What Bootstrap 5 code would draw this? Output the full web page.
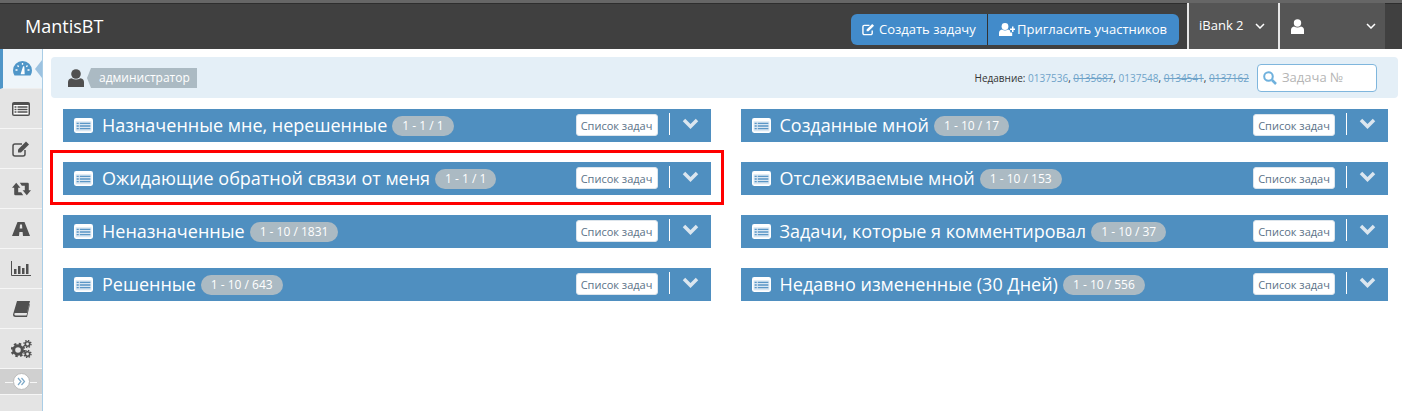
<!DOCTYPE html>
<html lang="ru"><head><meta charset="utf-8"><title>MantisBT</title>
<link href="https://cdn.jsdelivr.net/npm/bootstrap@5.3.0/dist/css/bootstrap.min.css" rel="stylesheet">
<style>
html,body{height:411px;overflow:hidden}
body{font-family:"Open Sans",sans-serif;font-size:13px;color:#393939;background:#fff;position:relative}
.topbar{height:49px;background:#404040;border-top:3px solid #666;box-shadow:inset 0 1px 0 #2e2e2e}
.brand{color:#fff;font-size:18px;margin-left:25px;line-height:46px}
.actions{margin-right:17px}
.grp{margin-right:8px;align-self:flex-start;margin-top:11px}
.acbtn{background:#428bca;color:#fff;font-size:13px;height:31px;padding-left:11px;display:flex;align-items:center;gap:4px;white-space:nowrap}
.acbtn svg{flex:none}
.acbtn:first-child{border-radius:6px 0 0 6px;border-right:1px solid #333;width:137px}
.acbtn:last-child{border-radius:0 6px 6px 0;width:191px;gap:2px}
.usercell{background:#555;color:#fff;border-left:2px solid #e6e6e6;height:46px;display:flex;align-items:center;font-size:13px}
.cell1{width:91px;padding-left:10px;padding-right:13px}
.cell2{width:107px;padding-left:11px;padding-right:9px}
.sidebar{width:43px;background:#e4e4e4;border-right:1px solid #a9cde6;height:362px;flex:none}
.sitem{height:40px;border-bottom:1px solid #f6f6f6;display:flex;align-items:center;justify-content:center;position:relative}
.sitem.on{background:#eef5fa;border-left:3px solid #4f96c8;border-bottom:1px solid #eee}
.sitem.on::after{content:"";position:absolute;right:0;top:11px;border:9px solid transparent;border-right:7px solid #9cc2e0;border-left:0}
.scoll{height:26px;background:#d0d0d0;border-bottom:1px solid #f6f6f6;display:flex;align-items:center;justify-content:center;position:relative}
.scoll::before{content:"";position:absolute;left:5px;right:5px;top:13px;border-top:1px solid #f6f6f6}
.scirc{width:17px;height:17px;border-radius:50%;background:#fff;border:1px solid #bbb;position:relative;display:flex;align-items:center;justify-content:center}
.crumbs{height:41px;margin:8px 4px 0 8px;background:#e4eff7;border-radius:4px;display:flex;align-items:center;padding:0 21px 0 17px}
.role{background:#abbac3;color:#fff;font-size:12px;height:20px;line-height:20px;padding:0 7px 0 8px;margin-left:7px;position:relative}
.role::before{content:"";position:absolute;left:-4px;top:0;border:10px solid transparent;border-left:0;border-right:4px solid #abbac3}
.recent{font-size:10px;color:#333;margin-right:8px;margin-top:1px}
.recent a{color:#6fa3c9;text-decoration:none}
.recent a.done{text-decoration:line-through}
.srch{width:120px;height:28px;background:#fff;border:1px solid #7fb6dd;border-radius:4px;display:flex;align-items:center;padding-left:5px;gap:5px;color:#b5b5b5;font-size:13px}
.boards{padding:11px 14px 0 20px}
.boards>.row{--bs-gutter-x:30px;--bs-gutter-y:20px}
.wbar{height:33px;background:#4f8fc0;color:#fff;display:flex;align-items:center;padding-left:11px}
.wbar>svg:first-child{flex:none}
.wtitle{font-size:18px;margin-left:9px;white-space:nowrap}
.pill{background:#abbac3;color:#fff;font-size:12px;border-radius:10px;height:20px;line-height:20px;padding:0 10px;margin-left:5px;white-space:nowrap}
.lbtn{background:#fff;color:#5b7288;font-size:11px;height:22px;line-height:21px;width:82px;text-align:center;border-radius:3px;border:1px solid #dde5ec;margin-left:auto;margin-top:-2px;white-space:nowrap}
.vsep{width:1px;height:22px;background:#fff;margin:-4px 12px 0 11px}
.chev{margin-right:12px;margin-top:-5px}
.redbox{position:absolute;left:50px;top:150px;width:674px;height:55px;border:3px solid #f00;pointer-events:none}
</style></head><body>
<header class="topbar d-flex justify-content-between">
<div class="brand">MantisBT</div>
<div class="d-flex align-items-center actions">
<div class="d-flex grp"><div class="acbtn">
<svg width="13" height="13" viewBox="0 0 14 14"><path d="M11 8v3a1.500 1.500 0 0 1-1.500 1.500h-7A1.500 1.500 0 0 1 1 11V4a1.500 1.500 0 0 1 1.500-1.500H8" fill="none" stroke="#fff" stroke-width="1.500"/><path d="M5 7 11 1l2 2-6 6H5z" fill="#fff"/></svg>Создать задачу</div>
<div class="acbtn"><svg width="16" height="13" viewBox="0 0 16 13"><circle cx="6" cy="3.500" r="3.400" fill="#fff"/><path d="M0 13V10q0-3 3-3.500 3 2 6 0 1.500.3 2.200 1.200v1.800h2V13z" fill="#fff"/><path d="M11 5.500h2v-2h1.500v2H16V7h-1.500v2H13V7h-2z" fill="#fff"/></svg>Пригласить участников</div></div>
<div class="usercell cell1">iBank 2<svg class="ms-auto" width="10" height="6" viewBox="0 0 10 6"><path d="M1 1l4 4 4-4" fill="none" stroke="#fff" stroke-width="1.500"/></svg></div>
<div class="usercell cell2"><svg width="13" height="15" viewBox="0 0 13 15"><circle cx="6.500" cy="4" r="3.700" fill="#fff"/><path d="M0 15V11q0-3 3-3.500 3.500 2 7 0 3 .5 3 3.500v4z" fill="#fff"/></svg><svg class="ms-auto" width="10" height="6" viewBox="0 0 10 6"><path d="M1 1l4 4 4-4" fill="none" stroke="#fff" stroke-width="1.500"/></svg></div>
</div>
</header>
<div class="d-flex">
<nav class="sidebar">
<div class="sitem on"><svg width="19" height="15" viewBox="0 0 19 15"><path d="M9.500 0A9.500 9.500 0 0 0 0 9.500q0 3 1.500 5h16q1.500-2 1.500-5A9.500 9.500 0 0 0 9.500 0z" fill="#4f96c8"/><path d="M8.500 12.500l2.200-7 .3 7zM2.500 9h2M14.500 9h2M4.500 4.500l1.200 1.200M14.500 4.500l-1.200 1.200M9.500 2v1.800" stroke="#fff" stroke-width="1.300" fill="#fff"/></svg></div>
<div class="sitem"><svg width="18" height="14" viewBox="0 0 18 14"><rect width="18" height="14" rx="2" fill="#505050"/><rect x="1.500" y="3" width="15" height="9.500" fill="#fff"/><path d="M2.500 5h2M5.500 5h10M2.500 7.500h2M5.500 7.500h10M2.500 10h2M5.500 10h10" stroke="#505050" stroke-width="1.300"/></svg></div>
<div class="sitem"><svg width="18" height="16" viewBox="0 0 18 16"><path d="M13 9v4a2 2 0 0 1-2 2H3a2 2 0 0 1-2-2V5a2 2 0 0 1 2-2h7" fill="none" stroke="#505050" stroke-width="1.500"/><path d="M6 8.500 14 .5l3 3-8 8H6z" fill="#505050"/></svg></div>
<div class="sitem"><svg width="19" height="14" viewBox="0 0 19 13.500"><path d="M0 5.500 4.200 .5 8.400 5.500H6.200V10H9.200L11.200 13H3.500Q2.200 13 2.200 11.800V5.500z" fill="#505050"/><path d="M19 8 14.800 13 10.600 8H12.800V3.500H9.800L7.800 .5H15.500Q16.800 .5 16.800 1.700V8z" fill="#505050"/></svg></div>
<div class="sitem"><svg width="18" height="14" viewBox="0 0 18 14"><path d="M5.500 0h7L18 14h-7l-.4-4H7.400L7 14H0zM8 2.500l-.3 4h2.600l-.3-4z" fill="#505050" fill-rule="evenodd"/></svg></div>
<div class="sitem"><svg width="20" height="15" viewBox="0 0 20 15"><path d="M.5 0v14.500H20" fill="none" stroke="#505050"/><path d="M3 8h2.500v5H3zM7 5h2.500v8H7zM11 7h2.500v6H11zM15 3h2.500v10H15z" fill="#505050"/></svg></div>
<div class="sitem"><svg width="17" height="16" viewBox="0 0 17 16"><path d="M4 0h13l-3 12H2.500q-1.200 0-1.200 1T2.500 14.500H13.500L16.500 3h.5l-3 13H2.500Q0 16 0 13.500z" fill="#505050"/></svg></div>
<div class="sitem"><svg width="21" height="18" viewBox="0 0 21 18"><g fill="none" stroke="#505050"><circle cx="7" cy="10" r="4.300" stroke-width="3"/><circle cx="7" cy="10" r="6.300" stroke-width="2" stroke-dasharray="2.500 2.450"/><circle cx="16.500" cy="4" r="2.200" stroke-width="1.600"/><circle cx="16.500" cy="4" r="3.500" stroke-width="1.400" stroke-dasharray="1.400 1.350"/><circle cx="16.500" cy="14" r="2.200" stroke-width="1.600"/><circle cx="16.500" cy="14" r="3.500" stroke-width="1.400" stroke-dasharray="1.400 1.350"/></g></svg></div>
<div class="scoll"><div class="scirc"><svg width="9" height="9" viewBox="0 0 9 9"><path d="M1 1l3 3.500L1 8M4.500 1l3 3.500-3 3.500" fill="none" stroke="#7ea9c8" stroke-width="1.200"/></svg></div></div>
</nav>
<main class="flex-grow-1">
<div class="crumbs">
<svg width="16" height="18" viewBox="0 0 16 18"><circle cx="8" cy="5" r="4.800" fill="#505050"/><path d="M0 18v-5q0-3 3.500-3.800 4.500 2.500 9 0Q16 10 16 13v5z" fill="#505050"/></svg>
<span class="role">администратор</span>
<div class="ms-auto recent">Недавние: <a href="#">0137536</a>, <a href="#" class="done">0135687</a>, <a href="#">0137548</a>, <a href="#" class="done">0134541</a>, <a href="#" class="done">0137162</a></div>
<div class="srch"><svg width="14" height="14" viewBox="0 0 14 14"><circle cx="5.500" cy="5.500" r="4.300" fill="none" stroke="#6fb1dd" stroke-width="2"/><path d="M9 9l4 4" stroke="#6fb1dd" stroke-width="2.500"/></svg>Задача №</div>
</div>
<div class="boards"><div class="row">
<div class="col-6"><div class="wbar"><svg width="19" height="15" viewBox="0 0 18 14"><rect width="18" height="14" rx="2" fill="#fff"/><rect x="1.500" y="3" width="15" height="9.500" fill="#d8e6f2"/><path d="M2.500 5h2M5.500 5h10M2.500 7.500h2M5.500 7.500h10M2.500 10h2M5.500 10h10" stroke="#5b97c6" stroke-width="1.300"/></svg><span class="wtitle">Назначенные мне, нерешенные</span><span class="pill">1 - 1 / 1</span><span class="lbtn">Список задач</span><span class="vsep"></span><svg class="chev" width="17" height="11" viewBox="0 0 17 11"><path d="M2 2l6.500 6.500L15 2" fill="none" stroke="#dbe6ef" stroke-width="3.500"/></svg></div></div>
<div class="col-6"><div class="wbar"><svg width="19" height="15" viewBox="0 0 18 14"><rect width="18" height="14" rx="2" fill="#fff"/><rect x="1.500" y="3" width="15" height="9.500" fill="#d8e6f2"/><path d="M2.500 5h2M5.500 5h10M2.500 7.500h2M5.500 7.500h10M2.500 10h2M5.500 10h10" stroke="#5b97c6" stroke-width="1.300"/></svg><span class="wtitle">Созданные мной</span><span class="pill">1 - 10 / 17</span><span class="lbtn">Список задач</span><span class="vsep"></span><svg class="chev" width="17" height="11" viewBox="0 0 17 11"><path d="M2 2l6.500 6.500L15 2" fill="none" stroke="#dbe6ef" stroke-width="3.500"/></svg></div></div>
<div class="col-6"><div class="wbar"><svg width="19" height="15" viewBox="0 0 18 14"><rect width="18" height="14" rx="2" fill="#fff"/><rect x="1.500" y="3" width="15" height="9.500" fill="#d8e6f2"/><path d="M2.500 5h2M5.500 5h10M2.500 7.500h2M5.500 7.500h10M2.500 10h2M5.500 10h10" stroke="#5b97c6" stroke-width="1.300"/></svg><span class="wtitle">Ожидающие обратной связи от меня</span><span class="pill">1 - 1 / 1</span><span class="lbtn">Список задач</span><span class="vsep"></span><svg class="chev" width="17" height="11" viewBox="0 0 17 11"><path d="M2 2l6.500 6.500L15 2" fill="none" stroke="#dbe6ef" stroke-width="3.500"/></svg></div></div>
<div class="col-6"><div class="wbar"><svg width="19" height="15" viewBox="0 0 18 14"><rect width="18" height="14" rx="2" fill="#fff"/><rect x="1.500" y="3" width="15" height="9.500" fill="#d8e6f2"/><path d="M2.500 5h2M5.500 5h10M2.500 7.500h2M5.500 7.500h10M2.500 10h2M5.500 10h10" stroke="#5b97c6" stroke-width="1.300"/></svg><span class="wtitle">Отслеживаемые мной</span><span class="pill">1 - 10 / 153</span><span class="lbtn">Список задач</span><span class="vsep"></span><svg class="chev" width="17" height="11" viewBox="0 0 17 11"><path d="M2 2l6.500 6.500L15 2" fill="none" stroke="#dbe6ef" stroke-width="3.500"/></svg></div></div>
<div class="col-6"><div class="wbar"><svg width="19" height="15" viewBox="0 0 18 14"><rect width="18" height="14" rx="2" fill="#fff"/><rect x="1.500" y="3" width="15" height="9.500" fill="#d8e6f2"/><path d="M2.500 5h2M5.500 5h10M2.500 7.500h2M5.500 7.500h10M2.500 10h2M5.500 10h10" stroke="#5b97c6" stroke-width="1.300"/></svg><span class="wtitle">Неназначенные</span><span class="pill">1 - 10 / 1831</span><span class="lbtn">Список задач</span><span class="vsep"></span><svg class="chev" width="17" height="11" viewBox="0 0 17 11"><path d="M2 2l6.500 6.500L15 2" fill="none" stroke="#dbe6ef" stroke-width="3.500"/></svg></div></div>
<div class="col-6"><div class="wbar"><svg width="19" height="15" viewBox="0 0 18 14"><rect width="18" height="14" rx="2" fill="#fff"/><rect x="1.500" y="3" width="15" height="9.500" fill="#d8e6f2"/><path d="M2.500 5h2M5.500 5h10M2.500 7.500h2M5.500 7.500h10M2.500 10h2M5.500 10h10" stroke="#5b97c6" stroke-width="1.300"/></svg><span class="wtitle">Задачи, которые я комментировал</span><span class="pill">1 - 10 / 37</span><span class="lbtn">Список задач</span><span class="vsep"></span><svg class="chev" width="17" height="11" viewBox="0 0 17 11"><path d="M2 2l6.500 6.500L15 2" fill="none" stroke="#dbe6ef" stroke-width="3.500"/></svg></div></div>
<div class="col-6"><div class="wbar"><svg width="19" height="15" viewBox="0 0 18 14"><rect width="18" height="14" rx="2" fill="#fff"/><rect x="1.500" y="3" width="15" height="9.500" fill="#d8e6f2"/><path d="M2.500 5h2M5.500 5h10M2.500 7.500h2M5.500 7.500h10M2.500 10h2M5.500 10h10" stroke="#5b97c6" stroke-width="1.300"/></svg><span class="wtitle">Решенные</span><span class="pill">1 - 10 / 643</span><span class="lbtn">Список задач</span><span class="vsep"></span><svg class="chev" width="17" height="11" viewBox="0 0 17 11"><path d="M2 2l6.500 6.500L15 2" fill="none" stroke="#dbe6ef" stroke-width="3.500"/></svg></div></div>
<div class="col-6"><div class="wbar"><svg width="19" height="15" viewBox="0 0 18 14"><rect width="18" height="14" rx="2" fill="#fff"/><rect x="1.500" y="3" width="15" height="9.500" fill="#d8e6f2"/><path d="M2.500 5h2M5.500 5h10M2.500 7.500h2M5.500 7.500h10M2.500 10h2M5.500 10h10" stroke="#5b97c6" stroke-width="1.300"/></svg><span class="wtitle">Недавно измененные (30 Дней)</span><span class="pill">1 - 10 / 556</span><span class="lbtn">Список задач</span><span class="vsep"></span><svg class="chev" width="17" height="11" viewBox="0 0 17 11"><path d="M2 2l6.500 6.500L15 2" fill="none" stroke="#dbe6ef" stroke-width="3.500"/></svg></div></div>
</div></div>
</main>
</div>
<div class="redbox"></div>
<script src="https://cdn.jsdelivr.net/npm/bootstrap@5.3.0/dist/js/bootstrap.bundle.min.js"></script>
</body></html>
